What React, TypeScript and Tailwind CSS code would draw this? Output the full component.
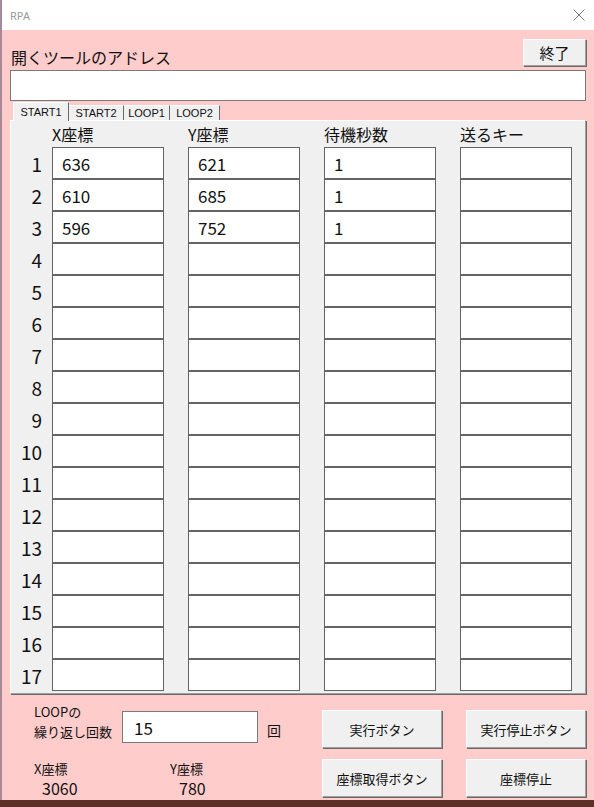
import React from 'react';

type Row = [string, string, string, string];

const rows: Row[] = Array.from({ length: 17 }, (_, i) => {
  if (i === 0) return ['636', '621', '1', ''];
  if (i === 1) return ['610', '685', '1', ''];
  if (i === 2) return ['596', '752', '1', ''];
  return ['', '', '', ''];
});

const headers = ['X座標', 'Y座標', '待機秒数', '送るキー'];
const tabs = ['START1', 'START2', 'LOOP1', 'LOOP2'];
const tabWidths = ['w-[56px]', 'w-[55px]', 'w-[46px]', 'w-[50px]'];

// Classic 3D button used for 終了 and the four action buttons
const WinButton: React.FC<{ label: string; className?: string }> = ({ label, className = '' }) => (
  <button
    className={`flex items-center justify-center bg-[#f0f0f0] border-t border-l border-white border-r border-b border-r-[#a0a0a0] border-b-[#a0a0a0] shadow-[1px_1px_0_#696969] text-[#111] ${className}`}
  >
    {label}
  </button>
);

export default function App() {
  return (
    <div className="w-[594px] h-[807px] bg-[#5c2f27] flex flex-col font-['Noto_Sans_CJK_JP',sans-serif] overflow-hidden">
      <div className="flex h-[800px]">
        {/* desktop strip on the left */}
        <div className="w-[3px] bg-[#a68896]" />
        <div className="flex-1 flex flex-col">
          {/* Title bar */}
          <div className="h-[30px] bg-white flex items-center justify-between pl-[8px] pr-[9px]">
            <span className="text-[11px] leading-none text-[#9a9a9a] font-['Noto_Sans',sans-serif]">RPA</span>
            <svg width="12" height="12" viewBox="0 0 12 12" className="text-[#777]">
              <path d="M0.5 0.5 L11.5 11.5 M11.5 0.5 L0.5 11.5" stroke="currentColor" strokeWidth="1" />
            </svg>
          </div>

          {/* Form body */}
          <div className="flex-1 bg-[#ffcccc] px-[8px] pt-[9px] flex flex-col">
            <div className="h-[27px] flex items-end justify-between">
              <span className="text-[16px] leading-[20px] mb-[-1px] pl-[1px] text-[#111]">開くツールのアドレス</span>
              <WinButton label="終了" className="w-[63px] h-[27px] text-[15px] leading-none" />
            </div>

            <div className="mt-[4px] h-[31px] bg-white border border-[#7a7a7a]" />

            {/* Tabs */}
            <div className="mt-[1px] h-[18px] flex items-end pl-[3px]">
              {tabs.map((t, i) => (
                <div
                  key={t}
                  className={`${tabWidths[i]} flex items-center justify-center bg-[#f0f0f0] text-[11px] leading-none font-['Liberation_Sans',sans-serif] text-[#111] ${
                    i === 0
                      ? 'h-[19px] relative z-10 -mb-px border-t border-l border-white border-r border-r-[#696969]'
                      : 'h-[15px] border-t border-white border-r border-r-[#696969]'
                  }`}
                >
                  {t}
                </div>
              ))}
            </div>

            {/* Tab panel */}
            <div className="h-[574px] bg-[#f0f0f0] border-t border-l border-white border-r border-b border-r-[#a0a0a0] border-b-[#a0a0a0] shadow-[1px_1px_0_#696969] flex flex-col">
              <div className="h-[26px] flex items-center pl-[41px] gap-[24px]">
                {headers.map((h) => (
                  <span key={h} className="w-[112px] text-[16px] leading-[20px] text-[#111]">
                    {h}
                  </span>
                ))}
              </div>
              {rows.map((r, i) => (
                <div key={i} className="flex items-center h-[32px]">
                  <span className="w-[41px] pr-[10px] text-right text-[19px] leading-none text-[#111]">{i + 1}</span>
                  <div className="flex gap-[24px]">
                    {r.map((v, j) => (
                      <div
                        key={j}
                        className="w-[112px] h-[32px] bg-white border border-[#646464] flex items-center pl-[9px] text-[17px] leading-none text-[#111]"
                      >
                        {v}
                      </div>
                    ))}
                  </div>
                </div>
              ))}
            </div>

            {/* Bottom controls */}
            <div className="flex">
              <div className="w-[312px] pl-[24px] pt-[8px] flex flex-col">
                <div className="flex items-start">
                  <div className="w-[88px] text-[13px] leading-[20px] text-[#111]">
                    <div>LOOPの</div>
                    <div>繰り返し回数</div>
                  </div>
                  <div className="mt-[9px] w-[136px] h-[32px] bg-white border border-[#7a7a7a] flex items-center pl-[11px] text-[17px] leading-none text-[#111]">
                    15
                  </div>
                  <span className="mt-[18px] ml-[9px] text-[14px] leading-[20px] text-[#111]">回</span>
                </div>
                <div className="mt-[17px] flex">
                  <div className="w-[136px] flex flex-col">
                    <span className="text-[13px] leading-[18px] text-[#111]">X座標</span>
                    <span className="pl-[8px] text-[16px] leading-[20px] text-[#111]">3060</span>
                  </div>
                  <div className="flex flex-col">
                    <span className="text-[13px] leading-[18px] text-[#111]">Y座標</span>
                    <span className="pl-[9px] text-[16px] leading-[20px] text-[#111]">780</span>
                  </div>
                </div>
              </div>
              <div className="pt-[16px] grid grid-cols-[120px_120px] gap-x-[24px] gap-y-[10px]">
                <WinButton label="実行ボタン" className="h-[38px] text-[13px] leading-none" />
                <WinButton label="実行停止ボタン" className="h-[38px] text-[13px] leading-none" />
                <WinButton label="座標取得ボタン" className="h-[38px] text-[13px] leading-none" />
                <WinButton label="座標停止" className="h-[38px] text-[13px] leading-none" />
              </div>
            </div>
          </div>
        </div>
      </div>
    </div>
  );
}
